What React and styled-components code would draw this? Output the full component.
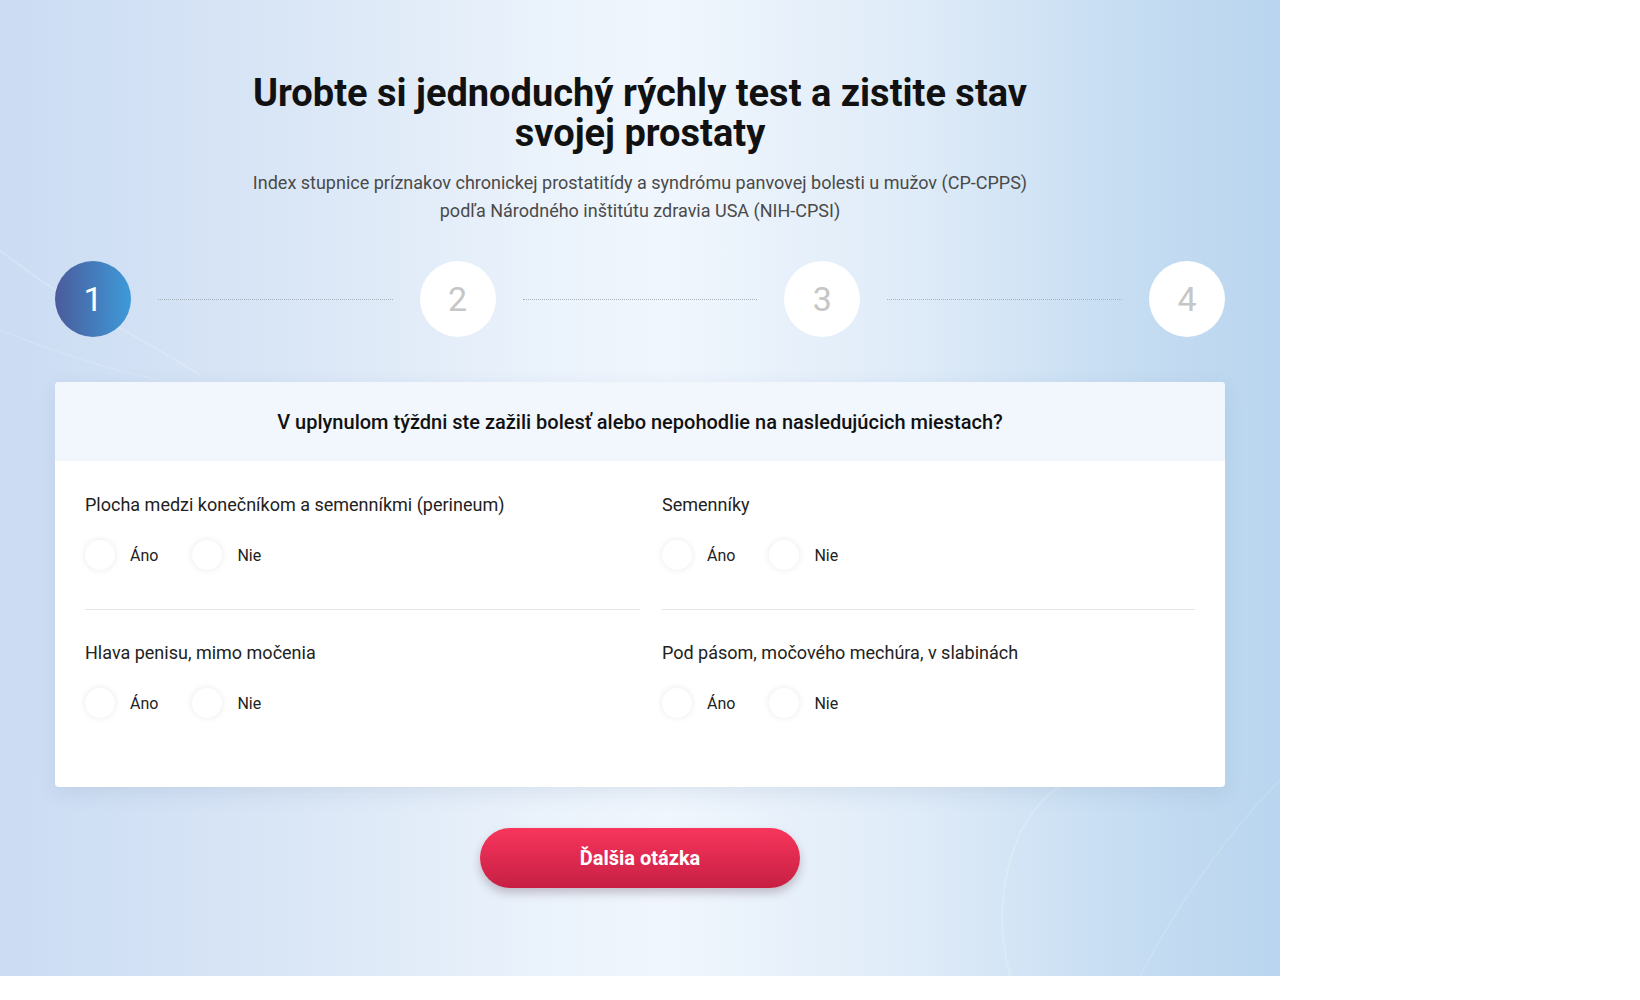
import styled, { createGlobalStyle } from 'styled-components';

const GlobalStyle = createGlobalStyle`
    body {
        margin: 0;
        background: #fff;
        font-family: Roboto, "Liberation Sans", sans-serif;
        color: #222;
    }
`

const Section = styled.section`
    position: relative;
    width: 1280px;
    height: 976px;
    box-sizing: border-box;
    padding-top: 73px;
    background: linear-gradient(90deg, #cbdcf3 0%, #d9e6f6 22%, #eaf2fb 42%, #f0f6fd 52%, #deebf8 72%, #c6ddf2 88%, #b9d5ef 100%);
`

const Waves = styled.svg`
    position: absolute;
    inset: 0;
    width: 100%;
    height: 100%;
    pointer-events: none;
`

const Notch = styled.div`
    position: absolute;
    left: 625px;
    bottom: -14px;
    width: 0;
    height: 0;
    border-left: 15px solid transparent;
    border-right: 15px solid transparent;
    border-top: 14px solid #f3f8fd;
`

const Container = styled.div`
    position: relative;
    width: 1170px;
    margin: 0 auto;
`

const Title = styled.h1`
    margin: 0 auto;
    width: 820px;
    text-align: center;
    font-size: 38px;
    line-height: 40px;
    font-weight: 700;
    color: #111;
`

const Lead = styled.p`
    margin: 16px auto 0;
    width: 800px;
    text-align: center;
    font-size: 18px;
    line-height: 28px;
    color: #4a4a4a;
`

const Steps = styled.div`
    display: flex;
    align-items: center;
    margin-top: 36px;
`

const Step = styled.div`
    flex: none;
    width: 76px;
    height: 76px;
    border-radius: 50%;
    display: flex;
    align-items: center;
    justify-content: center;
    font-size: 34px;
    font-weight: 400;
    color: ${props => props.active ? '#fff' : '#c6c6c6'};
    background: ${props => props.active ? 'linear-gradient(90deg, #4b5b9b 0%, #3e9ad9 100%)' : '#fff'};
`

const StepLine = styled.div`
    flex: 1;
    margin: 0 27px;
    border-top: 1px dotted #a9b1bd;
`

const Card = styled.div`
    margin-top: 45px;
    background: #fff;
    border-radius: 4px;
    box-shadow: 0 6px 20px rgba(80, 110, 150, 0.12);
    overflow: hidden;
`

const CardHeader = styled.div`
    height: 79px;
    display: flex;
    align-items: center;
    justify-content: center;
    background: #f1f7fd;
    font-size: 20px;
    font-weight: 500;
    color: #111;
`

const CardBody = styled.div`
    display: grid;
    grid-template-columns: 555px 1fr;
    column-gap: 22px;
    row-gap: 31px;
    padding: 32px 30px 30px;
`

const Question = styled.div`
    padding-bottom: 39px;
    border-bottom: ${props => props.last ? 'none' : '1px solid #e4e6e9'};
`

const QuestionLabel = styled.div`
    font-size: 18px;
    line-height: 24px;
    color: #222;
`

const Options = styled.div`
    display: flex;
    align-items: center;
    gap: 34px;
    margin-top: 23px;
`

const Option = styled.label`
    display: flex;
    align-items: center;
    gap: 15px;
    font-size: 16px;
    color: #222;
    cursor: pointer;
`

const RadioDot = styled.span`
    width: 30px;
    height: 30px;
    border-radius: 50%;
    background: #fff;
    box-shadow: 0 0 7px rgba(0, 0, 0, 0.09);
`

const Actions = styled.div`
    display: flex;
    justify-content: center;
    margin-top: 41px;
`

const NextButton = styled.button`
    width: 320px;
    height: 60px;
    border: none;
    border-radius: 30px;
    font-family: Roboto, "Liberation Sans", sans-serif;
    font-size: 20px;
    font-weight: 700;
    color: #fff;
    background: linear-gradient(180deg, #f8355c 0%, #c61f43 100%);
    box-shadow: 0 5px 10px rgba(90, 60, 80, 0.3);
    cursor: pointer;
`

const questions = [
    'Plocha medzi konečníkom a semenníkmi (perineum)',
    'Semenníky',
    'Hlava penisu, mimo močenia',
    'Pod pásom, močového mechúra, v slabinách',
];

export default function App() {
    return (
        <>
            <GlobalStyle />
            <Section>
                <Waves viewBox="0 0 1280 976" preserveAspectRatio="none">
                    <path d="M0 250 C 60 300, 130 330, 200 375" stroke="#fff" strokeOpacity="0.18" strokeWidth="2" fill="none" />
                    <path d="M0 330 C 50 350, 110 370, 160 380" stroke="#fff" strokeOpacity="0.15" strokeWidth="1.5" fill="none" />
                    <path d="M1010 976 C 990 900, 1010 820, 1060 786" stroke="#fff" strokeOpacity="0.2" strokeWidth="2" fill="none" />
                    <path d="M1140 976 C 1180 900, 1230 830, 1280 780" stroke="#fff" strokeOpacity="0.15" strokeWidth="1.5" fill="none" />
                </Waves>
                <Container>
                    <Title>Urobte si jednoduchý rýchly test a zistite stav svojej prostaty</Title>
                    <Lead>
                        Index stupnice príznakov chronickej prostatitídy a syndrómu panvovej bolesti u mužov (CP-CPPS)
                        <br />
                        podľa Národného inštitútu zdravia USA (NIH-CPSI)
                    </Lead>
                    <Steps>
                        <Step active>1</Step>
                        <StepLine />
                        <Step>2</Step>
                        <StepLine />
                        <Step>3</Step>
                        <StepLine />
                        <Step>4</Step>
                    </Steps>
                    <Card>
                        <CardHeader>V uplynulom týždni ste zažili bolesť alebo nepohodlie na nasledujúcich miestach?</CardHeader>
                        <CardBody>
                            {questions.map((q, id) => (
                                <Question key={id} last={id > 1}>
                                    <QuestionLabel>{q}</QuestionLabel>
                                    <Options>
                                        <Option><RadioDot />Áno</Option>
                                        <Option><RadioDot />Nie</Option>
                                    </Options>
                                </Question>
                            ))}
                        </CardBody>
                    </Card>
                    <Actions>
                        <NextButton>Ďalšia otázka</NextButton>
                    </Actions>
                </Container>
                <Notch />
            </Section>
        </>
    );
}
